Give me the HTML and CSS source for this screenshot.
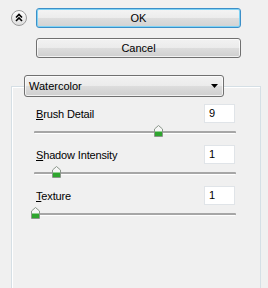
FILE: index.html
```html
<!DOCTYPE html>
<html lang="en">
<head>
  <meta charset="UTF-8" />
  <title>Watercolor</title>
  <link rel="stylesheet" href="styles.css">
</head>
<body>
  <div class="top">
    <div class="collapse">
      <svg width="16" height="16" viewBox="0 0 16 16">
        <defs>
          <linearGradient id="cg" x1="0" y1="0" x2="0" y2="1">
            <stop offset="0" stop-color="#ffffff"/>
            <stop offset="1" stop-color="#dcdcdc"/>
          </linearGradient>
        </defs>
        <circle cx="8" cy="8" r="7.5" fill="url(#cg)" stroke="#9a9a9a"/>
        <path d="M5 7.5 L8 4.5 L11 7.5 M5 11 L8 8 L11 11" fill="none" stroke="#000" stroke-width="1.6"/>
      </svg>
    </div>
    <div class="buttons">
      <div class="btn default">OK</div>
      <div class="btn">Cancel</div>
    </div>
  </div>

  <div class="panel">
    <fieldset class="group">
      <legend class="select">
        <span>Watercolor</span>
        <svg width="7" height="4" viewBox="0 0 7 4"><path d="M0 0 H7 L3.5 4 Z" fill="#000"/></svg>
      </legend>

      <div class="row">
        <div class="head">
          <label><u>B</u>rush Detail</label>
          <div class="num">9</div>
        </div>
        <div class="slider">
          <div class="track"></div>
          <svg class="thumb" style="left: 120px" width="9" height="12" viewBox="0 0 9 12">
            <path d="M0.5 4 L4.5 0.5 L8.5 4 V11.5 H0.5 Z" fill="#f6f6f6" stroke="#8a968a"/>
            <rect x="1" y="6.5" width="7" height="4.5" fill="#2ea52e"/>
          </svg>
        </div>
      </div>

      <div class="row">
        <div class="head">
          <label><u>S</u>hadow Intensity</label>
          <div class="num">1</div>
        </div>
        <div class="slider">
          <div class="track"></div>
          <svg class="thumb" style="left: 18px" width="9" height="12" viewBox="0 0 9 12">
            <path d="M0.5 4 L4.5 0.5 L8.5 4 V11.5 H0.5 Z" fill="#f6f6f6" stroke="#8a968a"/>
            <rect x="1" y="6.5" width="7" height="4.5" fill="#2ea52e"/>
          </svg>
        </div>
      </div>

      <div class="row">
        <div class="head">
          <label><u>T</u>exture</label>
          <div class="num">1</div>
        </div>
        <div class="slider">
          <div class="track"></div>
          <svg class="thumb" style="left: -3px" width="9" height="12" viewBox="0 0 9 12">
            <path d="M0.5 4 L4.5 0.5 L8.5 4 V11.5 H0.5 Z" fill="#f6f6f6" stroke="#8a968a"/>
            <rect x="1" y="6.5" width="7" height="4.5" fill="#2ea52e"/>
          </svg>
        </div>
      </div>
    </fieldset>
  </div>
</body>
</html>
```

FILE: styles.css
```css
* {
  margin: 0;
  padding: 0;
  box-sizing: border-box;
}

body {
  width: 268px;
  height: 288px;
  overflow: hidden;
  background: #f0f0f0;
  font-family: "Liberation Sans", Arial, sans-serif;
  font-size: 11px;
  color: #000;
}

.top {
  display: flex;
  align-items: flex-start;
  gap: 9px;
  padding: 8px 27px 0 11px;
}

.collapse {
  width: 16px;
  height: 16px;
  margin-top: 2px;
}

.collapse svg {
  display: block;
}

.buttons {
  flex: 1;
  display: flex;
  flex-direction: column;
  gap: 10px;
}

.btn {
  height: 20px;
  border: 1px solid #707070;
  border-radius: 3px;
  background: linear-gradient(#f2f2f2 0%, #ebebeb 50%, #dddddd 50%, #cfcfcf 100%);
  box-shadow: inset 0 0 0 1px rgba(255, 255, 255, 0.7);
  display: flex;
  justify-content: center;
  align-items: center;
  font-size: 11px;
}

.btn.default {
  border-color: #3c8fc8;
  background: linear-gradient(#f4f4f4 0%, #ececec 50%, #dedede 50%, #d2d2d2 100%);
  box-shadow: inset 0 0 0 1px #7fd3f5;
}

.panel {
  height: 213px;
  overflow: hidden;
  margin-top: 17px;
}

.group {
  margin: 0 7px 0 11px;
  height: 240px;
  border: 1px solid #d5dfe5;
  box-shadow: inset 1px 1px 0 #fff;
  padding: 0;
}

.select {
  margin-left: 12px;
  padding: 0 5px 0 4px;
  width: 200px;
  height: 22px;
  border: 1px solid #707070;
  border-radius: 3px;
  background: linear-gradient(#f2f2f2 0%, #ebebeb 50%, #dddddd 50%, #cfcfcf 100%);
  box-shadow: inset 0 0 0 1px rgba(255, 255, 255, 0.7);
  display: flex;
  justify-content: space-between;
  align-items: center;
  font-size: 11px;
}

.row {
  width: 224px;
  padding-left: 22px;
  margin-top: 7px;
  margin-bottom: 8px;
}

.row + .row {
  margin-top: 0;
}

.head {
  display: flex;
  justify-content: space-between;
  align-items: center;
  padding-left: 2px;
  padding-right: 1px;
}

.head label {
  letter-spacing: -0.15px;
}

.num {
  width: 31px;
  height: 19px;
  border: 1px solid #e0e4e8;
  background: #fff;
  padding: 2px 0 0 4px;
  line-height: 13px;
}

.slider {
  position: relative;
  height: 12px;
  margin-top: 2px;
}

.track {
  position: relative;
  top: 6px;
  height: 3px;
  background: #a6a6a6;
  border-bottom: 1px solid #fff;
  border-radius: 1px;
}

.thumb {
  position: absolute;
  top: 0;
}
```
